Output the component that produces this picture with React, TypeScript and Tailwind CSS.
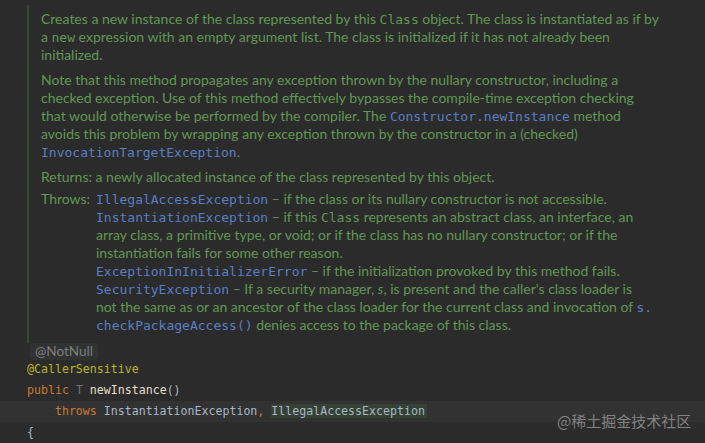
import React from "react";

const G = "text-[#629755]";
const sans = { fontFamily: "Lato, 'Noto Sans', sans-serif" };

function M({ children, c = "blue" }: { children: React.ReactNode; c?: "blue" | "green" }) {
  return (
    <span
      className={`font-['DejaVu_Sans_Mono',monospace] text-[13px] ${c === "blue" ? "text-[#5a7fc4]" : "text-[#629755]"}`}
    >
      {children}
    </span>
  );
}

function L({ children }: { children: React.ReactNode }) {
  return <div className="h-[18px] leading-[18px] whitespace-nowrap">{children}</div>;
}

export default function App() {
  return (
    <div className="w-[705px] h-[443px] bg-[#2b2b2b] overflow-hidden relative">
      {/* doc comment */}
      <div className="flex pt-[5px]">
        <div className="ml-[27px] w-[2px] h-[338px] bg-[#3a4636]" />
        <div className={`ml-[12px] pt-[5px] text-[14px] ${G}`} style={sans}>
          <L>
            Creates a new instance of the class represented by this <M c="green">Class</M> object. The class is instantiated as if by
          </L>
          <L>
            a <M c="green">new</M> expression with an empty argument list. The class is initialized if it has not already been
          </L>
          <L>initialized.</L>
          <div className="h-[7px]" />
          <L>Note that this method propagates any exception thrown by the nullary constructor, including a</L>
          <L>checked exception. Use of this method effectively bypasses the compile-time exception checking</L>
          <L>
            that would otherwise be performed by the compiler. The <M>Constructor.newInstance</M> method
          </L>
          <L>avoids this problem by wrapping any exception thrown by the constructor in a (checked)</L>
          <L>
            <M>InvocationTargetException</M>.
          </L>
          <div className="h-[7px]" />
          <L>Returns: a newly allocated instance of the class represented by this object.</L>
          <div className="h-[4px]" />
          <div className="flex">
            <div className="w-[55px] h-[18px] leading-[18px]">Throws:</div>
            <div>
              <L>
                <M>IllegalAccessException</M> – if the class or its nullary constructor is not accessible.
              </L>
              <L>
                <M>InstantiationException</M> – if this <M c="green">Class</M> represents an abstract class, an interface, an
              </L>
              <L>array class, a primitive type, or void; or if the class has no nullary constructor; or if the</L>
              <L>instantiation fails for some other reason.</L>
              <L>
                <M>ExceptionInInitializerError</M> – if the initialization provoked by this method fails.
              </L>
              <L>
                <M>SecurityException</M> – If a security manager, <i className="italic">s</i>, is present and the caller's class loader is
              </L>
              <L>
                not the same as or an ancestor of the class loader for the current class and invocation of <M>s.</M>
              </L>
              <L>
                <M>checkPackageAccess()</M> denies access to the package of this class.
              </L>
            </div>
          </div>
        </div>
      </div>

      {/* code */}
      <div className="font-['DejaVu_Sans_Mono',monospace] text-[11.6px]">
        <div className="h-[16px] flex items-center pl-[30px]">
          <span
            className="px-[5px] h-[17px] leading-[17px] rounded-[3px] bg-[#313232] text-[#7e7e7e] text-[13.5px]"
            style={sans}
          >
            @NotNull
          </span>
        </div>
        <div className="h-[21px] leading-[21px] pl-[27px] text-[#bbb529]">@CallerSensitive</div>
        <div className="h-[21px] leading-[21px] pl-[27px] whitespace-pre">
          <span className="text-[#cc7832]">public </span>
          <span className="text-[#6f737a]">T </span>
          <span className="text-[#e6dfc9]">newInstance</span>
          <span className="text-[#a9b7c6]">()</span>
        </div>
        <div className="h-[21px] leading-[21px] pl-[27px] whitespace-pre bg-[#323232]">
          <span className="text-[#cc7832]">    throws </span>
          <span className="text-[#a9b7c6]">InstantiationException</span>
          <span className="text-[#cc7832]">, </span>
          <span className="text-[#a9b7c6] bg-[#344134] pr-[2px]">IllegalAccessException</span>
        </div>
        <div className="h-[21px] leading-[21px] pl-[27px] text-[#a9b7c6]">{"{"}</div>
      </div>

      <div
        className="absolute left-[557px] top-[410px] text-[15px] text-[#8c8c8c] opacity-90"
        style={{ fontFamily: "'Noto Sans CJK SC', sans-serif" }}
      >
        @稀土掘金技术社区
      </div>
    </div>
  );
}
